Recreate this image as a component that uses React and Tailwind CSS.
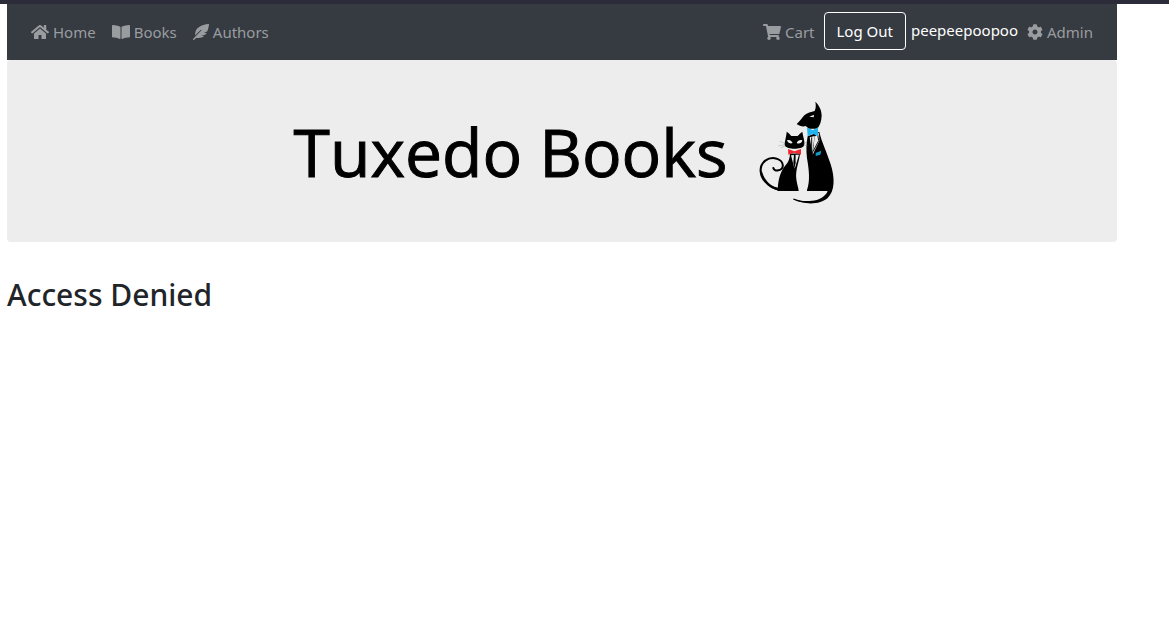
import { FaHome, FaBookOpen, FaFeatherAlt, FaShoppingCart, FaCog } from 'react-icons/fa';

function NavLink({ icon: Icon, iconSize, children }) {
  return (
    <a href="#" className="flex items-center gap-1 p-2 text-[#9a9da0] hover:text-white">
      <Icon size={iconSize} aria-hidden="true" />
      <span>{children}</span>
    </a>
  );
}

function CatsLogo() {
  return (
    <svg viewBox="0 0 285 345" className="h-[115px] w-[95px] shrink-0" role="img" aria-label="Two cats in tuxedos">
      {/* tall cat: tail, body, head */}
      <path d="M168 285 C178 258 174 225 168 190 C165 165 166 145 170 124 L205 110 C212 142 228 172 239 208 C252 248 252 289 230 309 C207 330 158 330 127 312 C157 322 200 321 219 303 C226 297 229 292 230 288 L168 288 Z" fill="#000" />
      <path d="M127 312 C160 327 207 325 226 304 C231 298 233 292 233 286" fill="none" stroke="#000" strokeWidth="4" />
      <path d="M193 20 C201 27 212 42 212 62 C211 79 207 91 199 101 L173 101 C170 98 167 96 164 93 C157 96 146 94 137 87 C147 78 153 69 160 61 C168 53 181 51 191 48 C195 39 195 29 193 20 Z" fill="#000" />
      <path d="M175 65 L189 59 L188 67 Z" fill="#ededed" />
      <path d="M176 127 L191 123 L184 173 Z" fill="#ededed" />
      <path d="M191 125 L204 113 L205 137 L185 179 Z" fill="#ededed" />
      <path d="M182 127 L182 169 M200 117 L203 137 L186 170" fill="none" stroke="#111" strokeWidth="3" />
      <path d="M168 97 L185 106 L201 97 L201 124 L185 116 L170 124 Z" fill="#20b3ed" />
      <path d="M194 174 L211 167 L208 179 L194 183 Z" fill="#139bc6" />
      {/* small cat: curled tail, body, head */}
      <path d="M94 282 C66 286 32 261 29 230 C26 201 53 184 77 191 C99 198 102 222 82 226 C74 228 68 224 67 219" fill="none" stroke="#000" strokeWidth="6" strokeLinecap="round" />
      <path d="M31 223 C29 250 53 285 91 288 L88 279 C57 277 38 253 31 223 Z" fill="#000" />
      <path d="M80 288 C81 257 86 235 100 215 C113 201 116 191 117 176 L147 175 C145 201 132 225 136 253 C138 269 142 277 143 288 Z" fill="#000" />
      <path d="M107 110 C113 113 117 119 121 123 L140 123 C144 119 149 113 154 110 C156 125 164 144 158 153 C151 164 108 164 102 152 C99 143 106 128 107 110 Z" fill="#000" />
      <path d="M108 136 C114 133 121 136 125 144 C117 147 110 144 108 136 Z M137 144 C140 136 148 133 154 136 C152 145 144 148 137 144 Z" fill="#ededed" />
      <path d="M120 181 L129 180 L130 220 Z M133 179 L144 179 L131 222 Z" fill="#ededed" />
      <path d="M129 178 L133 178 L134 204 L130 218 L127 204 Z" fill="#000" />
      <path d="M111 162 L130 169 L150 162 L150 179 L131 173 L112 179 Z" fill="#ed2932" />
      <path d="M102 145 L86 139 M101 149 L82 153 M102 153 L89 159 M158 145 L170 140 M158 150 L171 153" stroke="#777" strokeWidth="1" />
    </svg>
  );
}

export default function App() {
  return (
    <div className="min-h-screen border-t-4 border-[#2b2b39] bg-white font-['Noto_Sans',sans-serif] text-[#212529]">
      <div className="ml-[7px] max-w-[1110px]">
        <nav className="flex items-center justify-between bg-[#363a41] px-4 py-2 text-[15px] leading-6">
          <div className="flex items-center">
            <NavLink icon={FaHome} iconSize={18}>Home</NavLink>
            <NavLink icon={FaBookOpen} iconSize={18}>Books</NavLink>
            <NavLink icon={FaFeatherAlt} iconSize={16}>Authors</NavLink>
          </div>
          <div className="flex items-start gap-px">
            <NavLink icon={FaShoppingCart} iconSize={18}>Cart</NavLink>
            <button type="button" className="rounded border border-white px-3 py-1.5 text-white">Log Out</button>
            <span className="ml-1 py-1.5 text-white">peepeepoopoo</span>
            <NavLink icon={FaCog} iconSize={16}>Admin</NavLink>
          </div>
        </nav>
        <header className="flex h-[182px] items-center justify-center gap-6 rounded bg-[#ededed] pt-0.5 pl-4">
          <h1 className="mb-0.5 font-['Open_Sans',sans-serif] text-[66px] leading-none font-normal whitespace-nowrap text-black [-webkit-text-stroke:1px_black]">Tuxedo Books</h1>
          <CatsLogo />
        </header>
        <main className="pt-8">
          <h2 className="text-[30px] leading-[42px] font-medium">Access Denied</h2>
        </main>
      </div>
    </div>
  );
}
